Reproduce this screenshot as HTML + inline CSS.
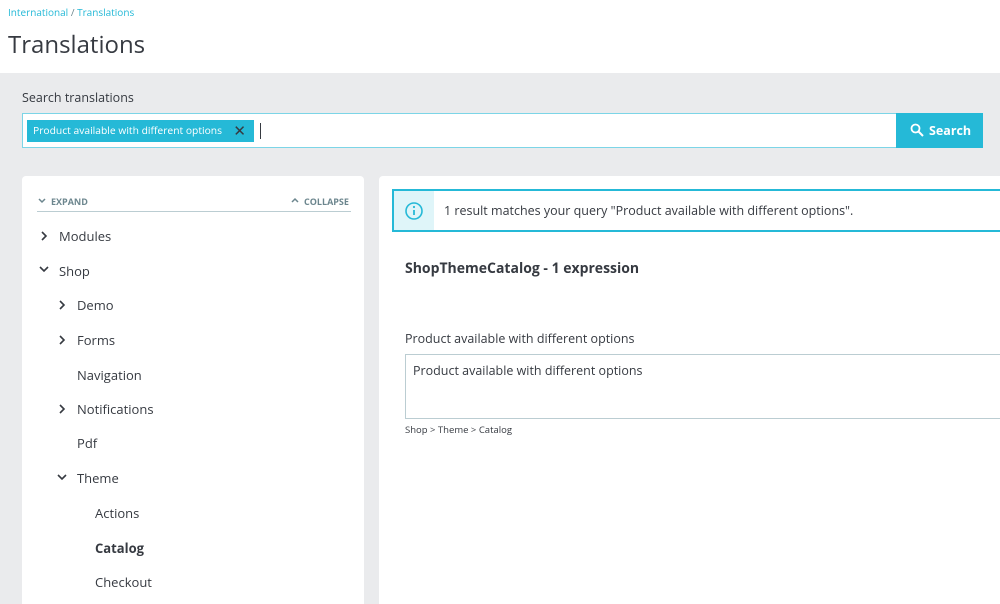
<!DOCTYPE html>
<html><head><style>
*{box-sizing:border-box;margin:0;padding:0}
html,body{width:1000px;height:604px;overflow:hidden}
body{background:#eaebed;font-family:"Open Sans","Liberation Sans",sans-serif;color:#363a41;position:relative}
.a{position:absolute}
.hdr{left:0;top:0;width:1000px;height:73px;background:#fff}
.bc{left:8px;top:5px;font-size:10px;color:#25b9d7}
.bc span{color:#6c868e}
h1{position:absolute;left:8px;top:28px;font-size:24px;font-weight:400;color:#363a41}
.lbl{left:22px;top:89px;font-size:12.5px}
.inp{left:22px;top:113px;width:875px;height:35px;background:#fff;border:1px solid #7cd5e7}
.tag{left:27px;top:120px;height:22px;width:227px;background:#25b9d7;color:#fff;font-size:10.3px;padding:4px 0 0 6px;white-space:nowrap}
.tag b{position:absolute;right:8px;top:1px;font-weight:400;font-size:15px;color:#363a41}
.caret{left:260px;top:123px;width:1px;height:16px;background:#363a41}
.btn{left:896px;top:113px;width:87px;height:35px;background:#25b9d7;color:#fff;font-size:12.5px;font-weight:bold;padding:9px 0 0 33px}
.lp{left:22px;top:176px;width:342px;height:428px;background:#fff;border-radius:4px 4px 0 0}
.rp{left:379px;top:176px;width:640px;height:428px;background:#fff;border-radius:4px 4px 0 0}
.small{font-size:9px;font-weight:bold;color:#6c868e;top:195px}
.line{left:37px;top:211px;width:314px;height:1px;background:#bbcdd2}
.it{font-size:13px;color:#363a41}
.al{left:392px;top:189px;width:620px;height:43px;border:2px solid #25b9d7;background:#fff}
.ali{left:394px;top:191px;width:40px;height:39px;background:#dff5f9}
.ta{left:405px;top:354px;width:600px;height:65px;border:1px solid #bbcdd2;border-right:none;font-size:12.5px;padding:7px 7px}
</style></head><body>
<div class="a hdr"></div>
<div class="a bc">International <span>/</span> Translations</div>
<h1>Translations</h1>
<div class="a lbl">Search translations</div>
<div class="a inp"></div>
<div class="a tag">Product available with different options<b>✕</b></div>
<div class="a caret"></div>
<div class="a btn">Search</div>
<svg class="a" style="left:910px;top:123px" width="14" height="14" viewBox="0 0 14 14"><circle cx="5.5" cy="5.5" r="4" fill="none" stroke="#fff" stroke-width="1.8"/><path d="M8.5 8.5L13 13" stroke="#fff" stroke-width="2"/></svg>
<div class="a lp"></div>
<div class="a rp"></div>
<div class="a small" style="left:51px">EXPAND</div>
<div class="a small" style="left:304px">COLLAPSE</div>
<div class="a line"></div>
<svg class="a" style="left:0;top:0" width="400" height="604">
<g fill="none" stroke="#6c868e" stroke-width="1.5"><path d="M39 199l3 3 3-3"/><path d="M292 202l3-3 3 3"/></g>
<g fill="none" stroke="#363a41" stroke-width="1.6">
<path d="M42 232l4 4-4 4"/><path d="M40 267l4 4 4-4"/><path d="M60 301l4 4-4 4"/><path d="M60 336l4 4-4 4"/><path d="M60 405l4 4-4 4"/><path d="M58 475l4 4 4-4"/>
</g></svg>
<div class="a it" style="left:59px;top:227px">Modules</div>
<div class="a it" style="left:59px;top:262px">Shop</div>
<div class="a it" style="left:77px;top:296px">Demo</div>
<div class="a it" style="left:77px;top:331px">Forms</div>
<div class="a it" style="left:77px;top:366px">Navigation</div>
<div class="a it" style="left:77px;top:400px">Notifications</div>
<div class="a it" style="left:77px;top:434px">Pdf</div>
<div class="a it" style="left:77px;top:469px">Theme</div>
<div class="a it" style="left:95px;top:504px">Actions</div>
<div class="a it" style="left:95px;top:539px;font-weight:bold">Catalog</div>
<div class="a it" style="left:95px;top:573px">Checkout</div>
<div class="a al"></div><div class="a ali"></div>
<svg class="a" style="left:404px;top:201px" width="20" height="20" viewBox="0 0 20 20"><circle cx="10" cy="10" r="8" fill="none" stroke="#25b9d7" stroke-width="1.6"/><path d="M10 9v5" stroke="#25b9d7" stroke-width="1.8"/><circle cx="10" cy="6" r="1.1" fill="#25b9d7"/></svg>
<div class="a" style="left:444px;top:202px;font-size:12.5px">1 result matches your query "Product available with different options".</div>
<div class="a" style="left:405px;top:259px;font-size:14px;font-weight:bold">ShopThemeCatalog - 1 expression</div>
<div class="a" style="left:405px;top:330px;font-size:12.5px">Product available with different options</div>
<div class="a ta">Product available with different options</div>
<div class="a" style="left:405px;top:423px;font-size:9.5px">Shop &gt; Theme &gt; Catalog</div>
</body></html>
